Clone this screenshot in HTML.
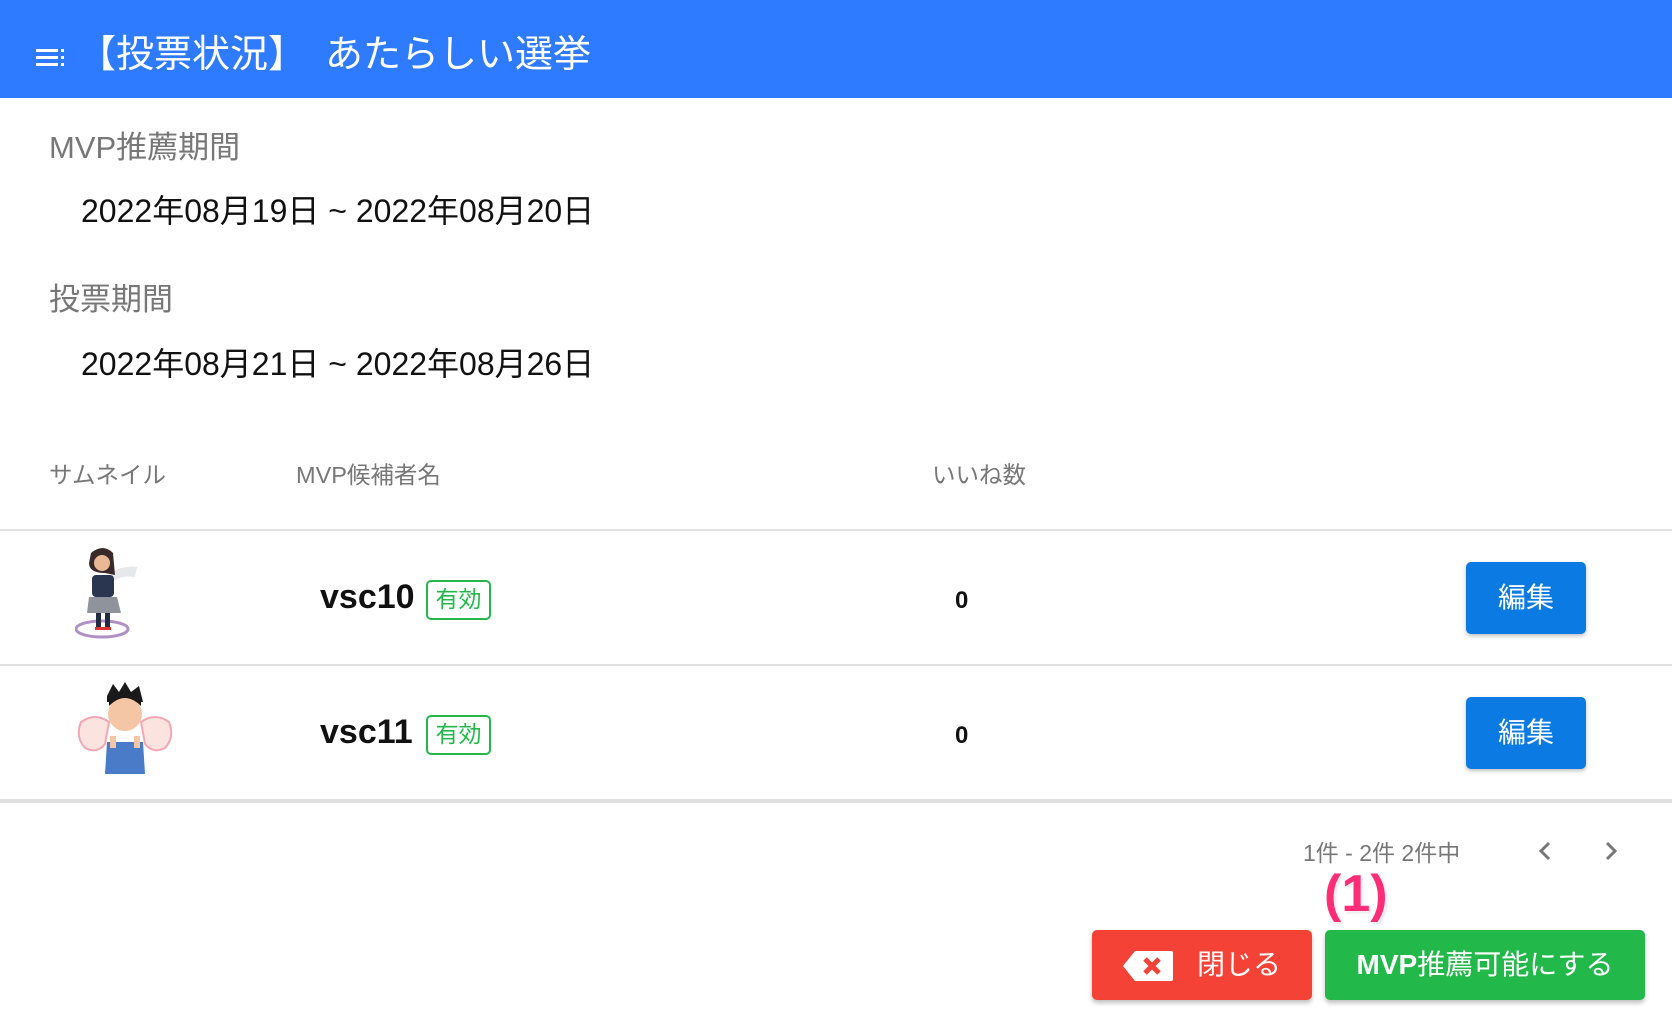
<!DOCTYPE html>
<html><head><meta charset="utf-8"><style>
*{margin:0;padding:0;box-sizing:border-box}
body{width:1672px;height:1034px;background:#fff;position:relative;overflow:hidden;font-family:"Liberation Sans","Noto Sans CJK JP",sans-serif}
.a{position:absolute;white-space:nowrap}
.hdr{left:0;top:0;width:1672px;height:98px;background:#2f7bff}
.lbl{color:#777;font-size:31px}
.date{color:#111;font-size:32px}
.th{color:#777;font-size:23.5px}
.line{left:0;width:1672px;background:#e0e0e0}
.name{font-size:34px;font-weight:bold;color:#111}
.badge{width:65px;height:40px;border:2px solid #22b94a;border-radius:5px;color:#22b94a;font-size:23px;text-align:center;line-height:35px}
.zero{font-size:24px;font-weight:bold;color:#111}
.edit{width:120px;height:72px;background:#0b7be3;border-radius:5px;color:#fff;font-size:28px;text-align:center;line-height:72px;box-shadow:0 2px 4px rgba(0,0,0,.25)}
.btn{height:70px;border-radius:5px;color:#fff;font-size:28px;line-height:70px;box-shadow:0 3px 5px rgba(0,0,0,.25)}
</style></head><body>
<div class="a hdr"></div>
<svg class="a" style="left:36px;top:47px" width="32" height="20" viewBox="0 0 32 20"><rect x="0" y="2" width="22" height="3" fill="#fff"/><rect x="0" y="9" width="22" height="3" fill="#fff"/><rect x="0" y="16" width="22" height="3" fill="#fff"/><rect x="25" y="2" width="3" height="3" fill="#fff"/><rect x="25" y="9" width="3" height="3" fill="#fff"/><rect x="25" y="16" width="3" height="3" fill="#fff"/></svg>
<div class="a" style="left:78px;top:31px;color:#fff;font-size:38px;line-height:48px">【投票状況】　あたらしい選挙</div>

<div class="a lbl" style="left:49px;top:122px">MVP推薦期間</div>
<div class="a date" style="left:81px;top:186px">2022年08月19日 ~ 2022年08月20日</div>
<div class="a lbl" style="left:49px;top:274px">投票期間</div>
<div class="a date" style="left:81px;top:339px">2022年08月21日 ~ 2022年08月26日</div>

<div class="a th" style="left:49px;top:456px">サムネイル</div>
<div class="a th" style="left:296px;top:456px">MVP候補者名</div>
<div class="a th" style="left:932px;top:456px">いいね数</div>

<div class="a line" style="top:529px;height:2px"></div>
<div class="a line" style="top:664px;height:2px"></div>
<div class="a line" style="top:799px;height:4px"></div>

<svg class="a" style="left:75px;top:545px" width="80" height="97" viewBox="0 0 80 97">
<ellipse cx="27" cy="84" rx="26" ry="8" fill="none" stroke="#b18fc9" stroke-width="3"/>
<path d="M35 28 Q48 20 62 22 L60 32 Q48 30 38 36Z" fill="#e6e8ec"/>
<path d="M16 8 Q28 -2 38 8 L40 30 L30 28 Q14 28 14 18Z" fill="#3a2a2a"/>
<circle cx="27" cy="18" r="8" fill="#e9b996"/>
<rect x="17" y="30" width="22" height="22" rx="4" fill="#2a3650"/>
<path d="M14 52 L42 52 L46 68 L12 68Z" fill="#8e939c"/>
<rect x="21" y="68" width="5" height="14" fill="#222a40"/><rect x="30" y="68" width="5" height="14" fill="#222a40"/>
<rect x="20" y="82" width="16" height="3" fill="#d33"/>
</svg>
<svg class="a" style="left:73px;top:682px" width="104" height="92" viewBox="0 0 104 92">
<path d="M8 40 Q2 55 12 66 Q24 72 32 62 L36 40 Q22 30 8 40Z" fill="#fbe4e0" stroke="#f4a6b4" stroke-width="2"/>
<path d="M96 40 Q102 55 92 66 Q80 72 72 62 L68 40 Q82 30 96 40Z" fill="#fbe4e0" stroke="#f4a6b4" stroke-width="2"/>
<path d="M34 60 L70 60 L72 92 L32 92Z" fill="#4a7bc8"/>
<path d="M34 14 L40 2 L46 10 L52 0 L58 10 L66 4 L70 20 L34 20Z" fill="#1a1a1a"/>
<circle cx="52" cy="32" r="17" fill="#f5c6a5"/>
<path d="M36 24 Q52 8 68 24 L68 18 Q52 6 36 18Z" fill="#1a1a1a"/>
<path d="M40 54 L40 66 M64 54 L64 66" stroke="#f5c6a5" stroke-width="6"/>
</svg>

<div class="a name" style="left:320px;top:578px">vsc10</div>
<div class="a badge" style="left:426px;top:580px">有効</div>
<div class="a zero" style="left:955px;top:587px">0</div>
<div class="a edit" style="left:1466px;top:562px">編集</div>

<div class="a name" style="left:320px;top:713px">vsc11</div>
<div class="a badge" style="left:426px;top:715px">有効</div>
<div class="a zero" style="left:955px;top:722px">0</div>
<div class="a edit" style="left:1466px;top:697px">編集</div>

<div class="a" style="left:1303px;top:834px;font-size:23px;color:#777">1件 - 2件 2件中</div>
<svg class="a" style="left:1535px;top:839px" width="20" height="24" viewBox="0 0 20 24"><path d="M14 4 L6 12 L14 20" fill="none" stroke="#777" stroke-width="3"/></svg>
<svg class="a" style="left:1601px;top:839px" width="20" height="24" viewBox="0 0 20 24"><path d="M6 4 L14 12 L6 20" fill="none" stroke="#777" stroke-width="3"/></svg>

<div class="a" style="left:1324px;top:864px;font-size:52px;font-weight:bold;color:#ff2d78;line-height:60px;text-shadow:0 0 3px #fff,0 0 3px #fff,2px 2px 2px #ddd">(1)</div>

<div class="a btn" style="left:1092px;top:930px;width:220px;background:#f44336">
<svg class="a" style="left:31px;top:21px" width="50" height="30" viewBox="0 0 50 30"><path d="M12 0 L48 0 Q50 0 50 2 L50 28 Q50 30 48 30 L12 30 L0 15Z" fill="#fff"/><path d="M22 8 L36 22 M36 8 L22 22" stroke="#f44336" stroke-width="5"/></svg>
<span class="a" style="left:105px;top:0">閉じる</span></div>
<div class="a btn" style="left:1325px;top:930px;width:320px;background:#22b94a;text-align:center"><b style="font-weight:bold">MVP</b>推薦可能にする</div>
</body></html>
